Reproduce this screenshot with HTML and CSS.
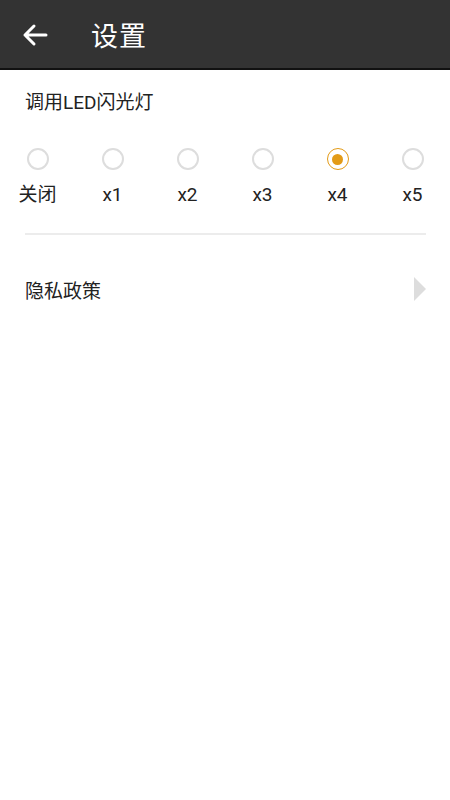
FILE: index.html
```html
<!DOCTYPE html>
<html lang="zh-CN">
<head>
  <meta charset="UTF-8" />
  <meta name="viewport" content="width=device-width, initial-scale=1" />
  <title>设置</title>
  <link rel="stylesheet" href="styles.css">
</head>
<body>
  <header class="top-bar">
    <svg class="back-icon" viewBox="0 0 26 24" width="26" height="24">
      <path d="M24 12H3M12 3L3 12l9 9" fill="none" stroke="#fff" stroke-width="3" stroke-linecap="round" stroke-linejoin="round"/>
    </svg>
    <h1>设置</h1>
  </header>

  <main class="settings">
    <section class="led-block">
      <div class="section-title">调用LED闪光灯</div>
      <div class="radio-row">
        <label class="radio-item"><span class="radio"></span><span>关闭</span></label>
        <label class="radio-item"><span class="radio"></span><span>x1</span></label>
        <label class="radio-item"><span class="radio"></span><span>x2</span></label>
        <label class="radio-item"><span class="radio"></span><span>x3</span></label>
        <label class="radio-item"><span class="radio checked"></span><span>x4</span></label>
        <label class="radio-item"><span class="radio"></span><span>x5</span></label>
      </div>
    </section>

    <div class="divider"></div>

    <a class="row-link" href="#">
      <span>隐私政策</span>
      <span class="chevron"></span>
    </a>
  </main>
</body>
</html>
```

FILE: styles.css
```css
* { box-sizing: border-box; }

body {
  margin: 0;
  font-family: Roboto, "Noto Sans CJK SC", sans-serif;
  background: #fff;
  color: #222;
}

.top-bar {
  height: 70px;
  background: #333;
  border-bottom: 2px solid #111;
  display: flex;
  align-items: center;
  padding-left: 22px;
}

.back-icon {
  display: block;
  margin-top: 1px;
}

.top-bar h1 {
  margin: 0 0 0 43px;
  font-size: 27px;
  font-weight: normal;
  color: #fff;
  letter-spacing: 1px;
}

.section-title {
  font-size: 19px;
  padding: 20px 25px 0;
  height: 78px;
  line-height: 26px;
}

.radio-row {
  display: grid;
  grid-template-columns: repeat(6, 75px);
}

.radio-item {
  display: flex;
  flex-direction: column;
  align-items: center;
  font-size: 19px;
  line-height: 24px;
  gap: 13px;
}

.radio {
  width: 22px;
  height: 22px;
  border: 2px solid #ddd;
  border-radius: 50%;
  display: flex;
  align-items: center;
  justify-content: center;
}

.radio.checked {
  border: 1.5px solid #e39b17;
}

.radio.checked::after {
  content: "";
  width: 11px;
  height: 11px;
  border-radius: 50%;
  background: #e39b17;
}

.divider {
  height: 2px;
  background: #ececec;
  margin: 26px 24px 0 25px;
}

.row-link {
  display: flex;
  align-items: center;
  justify-content: space-between;
  height: 108px;
  padding: 0 24px 0 25px;
  color: #222;
  text-decoration: none;
  font-size: 19px;
}

.chevron {
  width: 0;
  height: 0;
  border-top: 12px solid transparent;
  border-bottom: 12px solid transparent;
  border-left: 12px solid #ddd;
}
```
